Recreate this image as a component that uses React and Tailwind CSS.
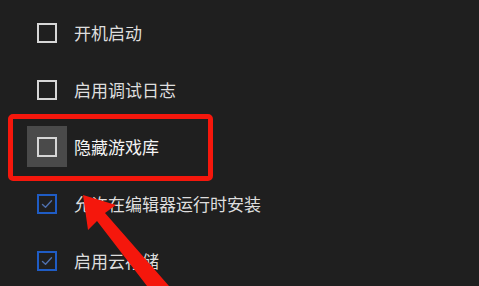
import React from "react";

const rows = [
  { label: "开机启动", checked: false },
  { label: "启用调试日志", checked: false },
  { label: "隐藏游戏库", checked: false, focus: true },
  { label: "允许在编辑器运行时安装", checked: true },
  { label: "启用云存储", checked: true },
];

function Box({ checked }) {
  if (checked) {
    return (
      <div className="w-[20px] h-[20px] border-2 border-[#1f5cc4] flex items-center justify-center">
        <svg width="14" height="14" viewBox="0 0 14 14" fill="none">
          <path d="M2.5 7.5 L5.5 10.2 L11.5 3.8" stroke="#4f70ad" strokeWidth="1.4" strokeLinecap="round" strokeLinejoin="round" />
        </svg>
      </div>
    );
  }
  return <div className="w-[20px] h-[20px] border-2 border-[#d6d6d6]" />;
}

export default function App() {
  return (
    <div
      className="relative w-[479px] h-[286px] overflow-hidden bg-[#1f1f1f]"
      style={{ fontFamily: '"Noto Sans CJK SC", "Noto Sans", sans-serif' }}
    >
      <div className="flex flex-col pt-[4px] pl-[27px]">
        {rows.map((r, i) => (
          <div key={i} className="h-[57px] flex items-center gap-[7px]">
            <div
              className={
                "w-[40px] h-[41px] flex items-center justify-center " +
                (r.focus ? "bg-[#4a4a4a]" : "")
              }
            >
              <Box checked={r.checked} />
            </div>
            <span
              className={
                "text-[17px] leading-none tracking-[0px] " +
                (r.focus ? "text-[#f4f4f4]" : "text-[#dedede]")
              }
            >
              {r.label}
            </span>
          </div>
        ))}
      </div>

      <div className="absolute left-[8px] top-[114px] w-[205px] h-[67px] border-[5px] border-[#f5170c] rounded-[5px]" />

      <svg className="absolute left-0 top-0" width="479" height="286" viewBox="0 0 479 286">
        <polygon
          points="83,195 116,205 105,213 169,286 147,286 97,221 88,230"
          fill="#f5170c"
        />
      </svg>
    </div>
  );
}
